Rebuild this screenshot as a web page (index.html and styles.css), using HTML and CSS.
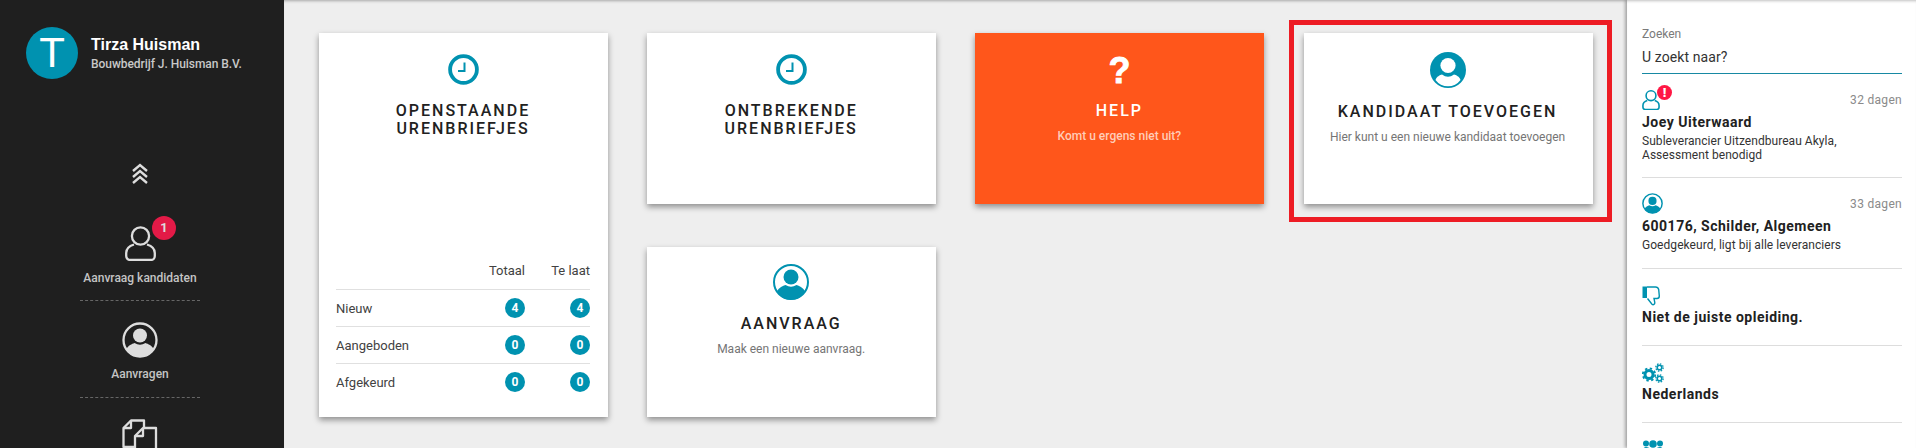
FILE: index.html
```html
<!DOCTYPE html>
<html lang="nl">
<head>
<meta charset="utf-8">
<title>Dashboard</title>
<link rel="stylesheet" href="styles.css">
</head>
<body>
<div class="app">
  <nav class="sidebar">
    <div class="brand">
      <div class="avatar">T</div>
      <div class="brand-text">
        <div class="brand-name">Tirza Huisman</div>
        <div class="brand-company">Bouwbedrijf J. Huisman B.V.</div>
      </div>
    </div>
    <svg class="chevrons" viewBox="0 0 16 22"><g fill="none" stroke="#ddd" stroke-width="2.4"><polyline points="1,8 8,2 15,8"/><polyline points="1,14 8,8 15,14"/><polyline points="1,20 8,14 15,20"/></g></svg>
    <div class="nav-item nav-first">
      <div class="nav-icon">
        <svg class="icon-user" viewBox="0 0 31 35"><g fill="none" stroke="#ddd" stroke-width="2.3"><circle cx="15.5" cy="10" r="8.6"/><path d="M9 18.5C4 20 1.2 23.5 1.2 27v3a4 4 0 0 0 4 4h20.6a4 4 0 0 0 4-4v-3c0-3.500-2.800-7-7.800-8.500"/></g></svg>
        <span class="nav-badge">1</span>
      </div>
      <div class="nav-label">Aanvraag kandidaten</div>
    </div>
    <div class="nav-item">
      <div class="nav-icon">
        <svg class="icon-person" viewBox="0 0 36 36"><circle cx="18" cy="18" r="16.500" fill="none" stroke="#ddd" stroke-width="2.300"/><circle cx="18" cy="13.500" r="7" fill="#ddd"/><path d="M4.500 27C6 23.500 10 22 12.500 21q5.500 3.500 11 0c2.500 1 6.500 2.500 8 6a15.500 15.500 0 0 1-27 0z" fill="#ddd"/></svg>
      </div>
      <div class="nav-label">Aanvragen</div>
    </div>
    <div class="nav-item nav-last">
      <div class="nav-icon">
        <svg class="icon-docs" viewBox="0 0 36 36"><g fill="none" stroke="#ddd" stroke-width="2.300" stroke-linejoin="round"><path d="M13 28H1.500V9L9 1.500H22V9"/><path d="M9 1.500V9H1.500"/><path d="M21 9H34V34.500H13V17z"/><path d="M21 9V17H13"/></g></svg>
      </div>
    </div>
  </nav>

  <main class="main">
    <div class="grid">
      <section class="card card-tall">
        <svg class="icon-clock" viewBox="0 0 31 31"><circle cx="15.500" cy="15.500" r="13.400" fill="none" stroke="#0092b0" stroke-width="3.800"/><path d="M16.500 8.500V17H10" fill="none" stroke="#0092b0" stroke-width="2"/></svg>
        <h2 class="card-title">OPENSTAANDE<br>URENBRIEFJES</h2>
        <table class="stats">
          <thead>
            <tr><th></th><th class="num">Totaal</th><th class="num">Te laat</th></tr>
          </thead>
          <tbody>
            <tr><td class="row-name">Nieuw</td><td class="num"><span class="pill">4</span></td><td class="num"><span class="pill">4</span></td></tr>
            <tr><td class="row-name">Aangeboden</td><td class="num"><span class="pill">0</span></td><td class="num"><span class="pill">0</span></td></tr>
            <tr><td class="row-name">Afgekeurd</td><td class="num"><span class="pill">0</span></td><td class="num"><span class="pill">0</span></td></tr>
          </tbody>
        </table>
      </section>

      <section class="card">
        <svg class="icon-clock" viewBox="0 0 31 31"><circle cx="15.500" cy="15.500" r="13.400" fill="none" stroke="#0092b0" stroke-width="3.800"/><path d="M16.500 8.500V17H10" fill="none" stroke="#0092b0" stroke-width="2"/></svg>
        <h2 class="card-title">ONTBREKENDE<br>URENBRIEFJES</h2>
      </section>

      <section class="card card-help">
        <div class="help-mark">?</div>
        <h2 class="card-title">HELP</h2>
        <p class="card-sub">Komt u ergens niet uit?</p>
      </section>

      <section class="card card-marked">
        <svg class="icon-add" viewBox="0 0 36 36"><circle cx="18" cy="18" r="18" fill="#0092b0"/><circle cx="18" cy="13.500" r="7.600" fill="#fff"/><path d="M5.500 28C6.500 24.500 10 23 12 22.500q6 4.500 12 0c2 .5 5.500 2 6.500 5.500a15.500 15.500 0 0 1-25 0z" fill="#fff"/></svg>
        <h2 class="card-title">KANDIDAAT TOEVOEGEN</h2>
        <p class="card-sub">Hier kunt u een nieuwe kandidaat toevoegen</p>
      </section>

      <section class="card card-request">
        <svg class="icon-add" viewBox="0 0 36 36"><circle cx="18" cy="18" r="17" fill="none" stroke="#0092b0" stroke-width="2"/><circle cx="18" cy="13" r="7.500" fill="#0092b0"/><path d="M4 27C6 23.500 10 22 12.500 21q5.500 3.500 11 0c2.500 1 6.500 2.500 8.500 6a15.500 15.500 0 0 1-28 0z" fill="#0092b0"/></svg>
        <h2 class="card-title">AANVRAAG</h2>
        <p class="card-sub">Maak een nieuwe aanvraag.</p>
      </section>
    </div>
  </main>

  <aside class="panel">
    <div class="search">
      <div class="search-label">Zoeken</div>
      <div class="search-input">U zoekt naar?</div>
    </div>

    <article class="item">
      <div class="item-head">
        <div class="item-icon">
          <svg class="ic-user" viewBox="0 0 31 35"><g fill="none" stroke="#0092b0" stroke-width="2.800"><circle cx="15.500" cy="10" r="8.600"/><path d="M9 18.500C4 20 1.400 23.500 1.400 27v3a4 4 0 0 0 4 4h20.200a4 4 0 0 0 4-4v-3c0-3.500-2.600-7-7.600-8.500"/></g></svg>
          <span class="alert">!</span>
        </div>
        <span class="item-age">32 dagen</span>
      </div>
      <h3 class="item-title">Joey Uiterwaard</h3>
      <p class="item-sub">Subleverancier Uitzendbureau Akyla,<br>Assessment benodigd</p>
    </article>

    <article class="item item-short">
      <div class="item-head">
        <svg class="ic-person" viewBox="0 0 36 36"><circle cx="18" cy="18" r="16.500" fill="none" stroke="#0092b0" stroke-width="2.500"/><circle cx="18" cy="13.500" r="7" fill="#0092b0"/><path d="M4.500 27C6 23.500 10 22 12.500 21q5.500 3.500 11 0c2.500 1 6.500 2.500 8 6a15.500 15.500 0 0 1-27 0z" fill="#0092b0"/></svg>
        <span class="item-age">33 dagen</span>
      </div>
      <h3 class="item-title">600176, Schilder, Algemeen</h3>
      <p class="item-sub">Goedgekeurd, ligt bij alle leveranciers</p>
    </article>

    <article class="item item-plain">
      <div class="item-head">
        <svg class="ic-thumb" viewBox="0 0 18 20"><path d="M.5.500H5V12H.5z" fill="#0092b0"/><path d="M5 1h8.500c2 0 2.800 1 3.200 2.500l.6 6.500c0 1.800-1 2.500-2.300 2.500H12l.8 4c.2 1.700-1.500 2.800-2.800 1.700L5.500 12.500" fill="none" stroke="#0092b0" stroke-width="1.400"/></svg>
      </div>
      <h3 class="item-title">Niet de juiste opleiding.</h3>
    </article>

    <article class="item item-plain">
      <div class="item-head">
        <svg class="ic-gears" viewBox="0 0 22 20"><g fill="none" stroke="#0092b0"><circle cx="7" cy="11.500" r="4" stroke-width="3"/><circle cx="7" cy="11.500" r="6.200" stroke-width="1.800" stroke-dasharray="2.400 2.470"/><circle cx="17.500" cy="4.500" r="2.300" stroke-width="1.600"/><circle cx="17.500" cy="4.500" r="3.700" stroke-width="1.300" stroke-dasharray="1.500 1.400"/><circle cx="17.500" cy="15.500" r="2.300" stroke-width="1.600"/><circle cx="17.500" cy="15.500" r="3.700" stroke-width="1.300" stroke-dasharray="1.500 1.400"/></g></svg>
      </div>
      <h3 class="item-title">Nederlands</h3>
    </article>

    <article class="item item-plain item-last">
      <div class="item-head">
        <svg class="ic-users" viewBox="0 0 22 20"><g fill="#0092b0"><circle cx="4" cy="3.500" r="3"/><circle cx="18" cy="3.500" r="3"/><circle cx="11" cy="4" r="3.800"/><path d="M0 13c0-4 2-6 4-6s3 1 3 1l-1 5zM22 13c0-4-2-6-4-6s-3 1-3 1l1 5zM6 16c0-5 2-7.500 5-7.500s5 2.500 5 7.500z"/></g></svg>
      </div>
    </article>
  </aside>
</div>
</body>
</html>
```

FILE: styles.css
```css
* {
  box-sizing: border-box;
}

html,
body {
  margin: 0;
  height: 100%;
  overflow: hidden;
}

body {
  font-family: Roboto, "Liberation Sans", sans-serif;
  color: #212121;
  background: #eee;
}

.app {
  display: flex;
  height: 448px;
  overflow: hidden;
}

/* Sidebar */
.sidebar {
  flex: 0 0 284px;
  display: flex;
  flex-direction: column;
  background: #1f1f1f;
  color: #ccc;
}

.sidebar > * {
  flex: none;
}

.brand {
  display: flex;
  gap: 13px;
  padding: 27px 0 0 26px;
  height: 163px;
}

.avatar {
  width: 52px;
  height: 52px;
  border-radius: 50%;
  background: #0092b0;
  color: #fff;
  font-family: "Liberation Sans", sans-serif;
  font-size: 42px;
  line-height: 52px;
  text-align: center;
}

.brand-text {
  padding-top: 9px;
}

.brand-name {
  font-family: "Liberation Sans", sans-serif;
  font-size: 16px;
  font-weight: 700;
  line-height: 18px;
  color: #fff;
}

.brand-company {
  margin-top: 2px;
  font-size: 12px;
  font-weight: 500;
  line-height: 16px;
  letter-spacing: -0.05px;
  color: #c8c8c8;
}

.chevrons {
  display: block;
  width: 16px;
  height: 22px;
  margin-left: 132px;
}

.nav-item {
  width: 120px;
  margin-left: 80px;
  height: 97px;
  padding-top: 21px;
  border-bottom: 1px dashed #666;
  text-align: center;
}

.nav-first {
  height: 116px;
  padding-top: 41px;
}

.nav-last {
  border-bottom: 0;
}

.nav-icon {
  position: relative;
  height: 35px;
}

.nav-label {
  margin-top: 9px;
  font-size: 12px;
  font-weight: 500;
  line-height: 16px;
  color: #c4c4c4;
}

.icon-user {
  width: 31px;
  height: 35px;
}

.icon-person {
  width: 36px;
  height: 36px;
}

.icon-docs {
  width: 36px;
  height: 36px;
}

.nav-badge {
  position: absolute;
  top: -10px;
  left: 72px;
  width: 24px;
  height: 24px;
  border-radius: 50%;
  background: #e31a47;
  color: #ddd;
  font-size: 13px;
  font-weight: 700;
  line-height: 24px;
}

/* Main */
.main {
  flex: 1 1 auto;
  padding: 33px 0 0 35px;
  box-shadow: inset 0 3px 3px -2px rgba(0, 0, 0, 0.3);
}

.grid {
  display: grid;
  grid-template-columns: repeat(4, 289px);
  grid-template-rows: 171px 170px;
  column-gap: 39.2px;
  row-gap: 43px;
}

.card {
  position: relative;
  display: flex;
  flex-direction: column;
  align-items: center;
  padding: 21px 18px 0 17px;
  background: #fff;
  box-shadow: 0 3px 6px rgba(0, 0, 0, 0.4);
}

.card-tall {
  grid-row: span 2;
  padding-bottom: 17px;
}

.card-request {
  grid-column: 2;
  padding-top: 17px;
}

.card-marked {
  padding-top: 19px;
}

.card-marked::after {
  content: "";
  position: absolute;
  inset: -13px -19px -18px -15px;
  border: 5px solid #ed1c24;
  pointer-events: none;
}

.icon-clock {
  display: block;
  flex: none;
  width: 31px;
  height: 31px;
  margin-bottom: 17px;
}

.icon-add {
  display: block;
  flex: none;
  width: 36px;
  height: 36px;
  margin-bottom: 15px;
}

.card-title {
  margin: 0;
  font-size: 16px;
  font-weight: 500;
  line-height: 18px;
  letter-spacing: 2px;
  text-align: center;
  color: #212121;
}

.card-sub {
  margin: 8px 0 0;
  font-size: 12px;
  line-height: 16px;
  color: #757575;
}

.card-help {
  background: #ff561b;
}

.card-help .card-title {
  color: #fff;
}

.card-help .card-sub {
  color: #ffcdb8;
  font-weight: 500;
}

.help-mark {
  height: 48px;
  font-family: "Liberation Sans", sans-serif;
  font-size: 36px;
  font-weight: 700;
  line-height: 34px;
  color: #fff;
  -webkit-text-stroke: 0.8px #fff;
}

/* Table */
.stats {
  width: 254px;
  margin-top: auto;
  border-collapse: collapse;
  font-size: 13px;
  color: #424242;
}

.stats th {
  height: 37px;
  padding: 0;
  font-weight: 400;
}

.stats td {
  height: 37px;
  padding: 0;
  border-top: 1px solid #e0e0e0;
}

.stats .row-name {
  padding-top: 2px;
}

.stats .num {
  width: 65px;
  text-align: right;
}

.pill {
  display: inline-block;
  width: 20px;
  height: 20px;
  border-radius: 50%;
  background: #0092b0;
  color: #fff;
  font-size: 12px;
  font-weight: 700;
  line-height: 20px;
  text-align: center;
  vertical-align: middle;
}

/* Right panel */
.panel {
  position: relative;
  flex: 0 0 289px;
  padding: 0 14px 0 15px;
  background: #fff;
  box-shadow: -2px 0 3px rgba(0, 0, 0, 0.3), inset 0 3px 3px -2px rgba(0, 0, 0, 0.25);
}

.search {
  height: 74px;
  padding-top: 26px;
  border-bottom: 1px solid #1789a3;
}

.search-label {
  font-size: 12px;
  line-height: 16px;
  color: #7a7a7a;
}

.search-input {
  margin-top: 6px;
  font-size: 14px;
  line-height: 18px;
  letter-spacing: 0.1px;
  color: #333;
}

.item {
  padding: 15px 0;
  border-bottom: 1px solid #ddd;
}

.item-short {
  padding-bottom: 16px;
}

.item-plain {
  padding-top: 16px;
  padding-bottom: 19px;
}

.item-plain .item-title {
  margin-top: 2px;
}

.item-last {
  border-bottom: 0;
}

.item-head {
  display: flex;
  align-items: center;
  justify-content: space-between;
  height: 21px;
}

.item-icon {
  position: relative;
  display: flex;
}

.ic-user {
  width: 18px;
  height: 20px;
}

.ic-person {
  width: 21px;
  height: 21px;
}

.ic-thumb {
  width: 18px;
  height: 20px;
}

.ic-gears {
  width: 22px;
  height: 20px;
}

.ic-users {
  width: 22px;
  height: 20px;
}

.alert {
  position: absolute;
  top: -5px;
  left: 15px;
  width: 15px;
  height: 15px;
  border-radius: 50%;
  background: #ff1744;
  color: #fff;
  font-size: 13px;
  font-weight: 900;
  line-height: 15px;
  text-align: center;
}

.item-age {
  font-size: 12px;
  letter-spacing: 0.3px;
  color: #8a8a8a;
}

.item-title {
  margin: 3px 0 0;
  font-size: 14px;
  font-weight: 700;
  line-height: 18px;
  letter-spacing: 0.5px;
  color: #212121;
}

.item-sub {
  margin: 3px 0 0;
  font-size: 12px;
  line-height: 14px;
  letter-spacing: 0.05px;
  color: #333;
}
```
